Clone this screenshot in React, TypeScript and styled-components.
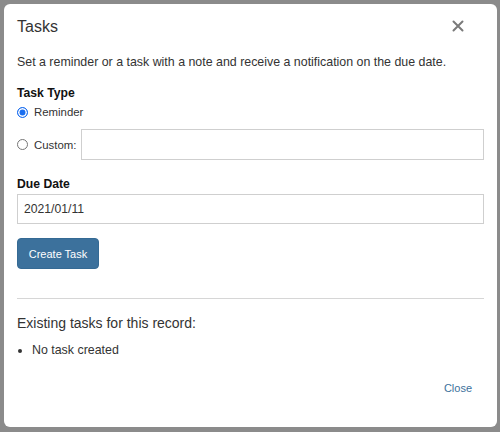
import * as React from 'react'
import styled, { createGlobalStyle } from 'styled-components'

const GlobalStyle = createGlobalStyle`
  html, body {
    margin: 0;
    padding: 0;
    background: #8b8b8b;
    font-family: "Liberation Sans", Arial, sans-serif;
    color: #333;
  }
  * { box-sizing: border-box; }
`

const Backdrop = styled.div`
  width: 500px;
  height: 432px;
  padding: 4px 3px 5px 4px;
`

const Modal = styled.div`
  background: #fff;
  border-radius: 6px;
  height: 423px;
  padding: 13px 13px 0;
  display: flex;
  flex-direction: column;
`

const Header = styled.div`
  display: flex;
  justify-content: space-between;
  align-items: center;
  height: 20px;
`

const Title = styled.h4`
  margin: 0;
  font-size: 16px;
  line-height: 20px;
  font-weight: 400;
  color: #333;
`

const CloseX = styled.button`
  border: 0;
  background: none;
  padding: 0;
  margin: -3px 20px 0 0;
  width: 12px;
  height: 12px;
  display: flex;
  cursor: pointer;
`

const Intro = styled.p`
  margin: 16px 0 0;
  font-size: 12.4px;
  line-height: 18px;
`

const Label = styled.div<{ $top: number }>`
  margin-top: ${p => p.$top}px;
  font-size: 12.2px;
  font-weight: 700;
  color: #111;
  line-height: 18px;
`

const RadioRow = styled.label<{ $top: number }>`
  display: flex;
  align-items: center;
  margin-top: ${p => p.$top}px;
  font-size: 11.4px;
  color: #333;
  min-height: 18px;
`

const RadioDot = styled.span<{ $on?: boolean }>`
  width: 11px;
  height: 11px;
  border-radius: 50%;
  margin-right: 6px;
  flex: none;
  border: 1px solid ${p => (p.$on ? '#1a6ef0' : '#767676')};
  background: ${p => (p.$on ? '#1a6ef0' : '#fff')};
  box-shadow: ${p => (p.$on ? 'inset 0 0 0 1.5px #fff' : 'none')};
`

const TextBox = styled.input`
  display: block;
  border: 1px solid #cfcfcf;
  border-radius: 0;
  padding: 0 6px;
  font-family: inherit;
  font-size: 12.2px;
  color: #333;
  outline: none;
  background: #fff;
`

const CustomBox = styled(TextBox)`
  flex: 1;
  min-width: 0;
  height: 31px;
  margin-left: 5px;
`

const DateBox = styled(TextBox)`
  width: 100%;
  margin-top: 1px;
  height: 30px;
`

const PrimaryButton = styled.button`
  align-self: flex-start;
  margin-top: 14px;
  width: 82px;
  height: 31px;
  padding: 0;
  border: 1px solid #356a94;
  border-radius: 4px;
  background: #3c719c;
  color: #fff;
  font-family: inherit;
  font-size: 11px;
`

const Rule = styled.hr`
  margin: 29px 0 0;
  border: 0;
  border-top: 1px solid #d6d6d6;
`

const Existing = styled.div`
  margin-top: 14px;
  font-size: 14px;
  line-height: 20px;
  color: #333;
`

const TaskList = styled.ul`
  margin: 8px 0 0;
  padding-left: 15px;
  font-size: 12.4px;
  line-height: 18px;
`

const Footer = styled.div`
  margin-top: 20px;
  display: flex;
  justify-content: flex-end;
  padding-right: 12px;
  line-height: 18px;
`

const CloseLink = styled.a`
  font-size: 11px;
  color: #3c719c;
  text-decoration: none;
  cursor: pointer;
`

const App: React.FunctionComponent = () => {
  return (
    <Backdrop>
      <GlobalStyle />
      <Modal>
        <Header>
          <Title>Tasks</Title>
          <CloseX aria-label="Close">
            <svg width="12" height="12" viewBox="0 0 12 12">
              <path d="M1.5 1.5 L10.5 10.5 M10.5 1.5 L1.5 10.5" stroke="#7a7a7a" strokeWidth="2" strokeLinecap="round" />
            </svg>
          </CloseX>
        </Header>
        <Intro>Set a reminder or a task with a note and receive a notification on the due date.</Intro>
        <Label $top={13}>Task Type</Label>
        <RadioRow $top={1}>
          <RadioDot $on />
          Reminder
        </RadioRow>
        <RadioRow $top={8}>
          <RadioDot />
          Custom:
          <CustomBox type="text" />
        </RadioRow>
        <Label $top={15}>Due Date</Label>
        <DateBox type="text" defaultValue="2021/01/11" />
        <PrimaryButton>Create Task</PrimaryButton>
        <Rule />
        <Existing>Existing tasks for this record:</Existing>
        <TaskList>
          <li>No task created</li>
        </TaskList>
        <Footer>
          <CloseLink>Close</CloseLink>
        </Footer>
      </Modal>
    </Backdrop>
  )
}

export default App
